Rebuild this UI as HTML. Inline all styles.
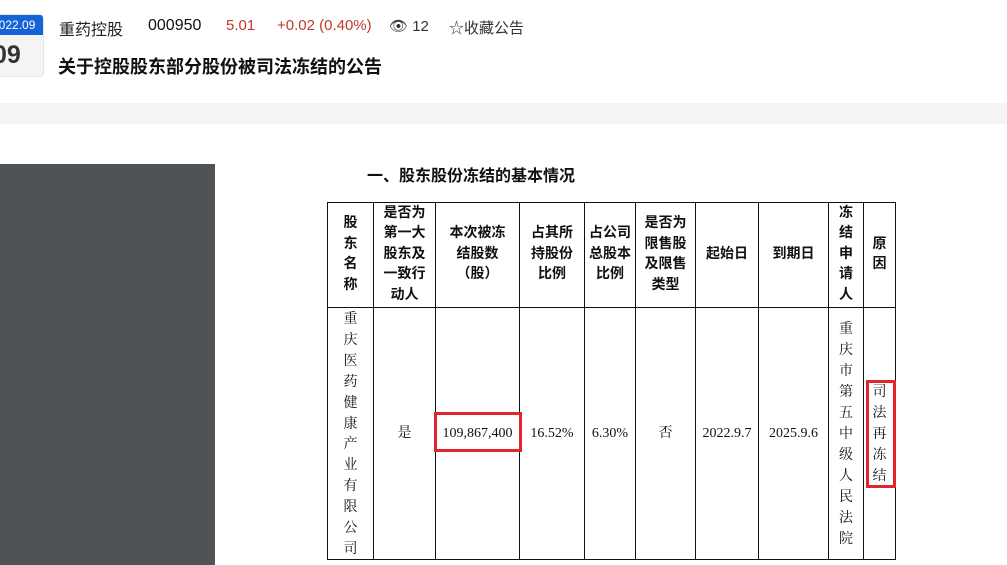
<!DOCTYPE html>
<html><head><meta charset="utf-8">
<style>
*{margin:0;padding:0;box-sizing:border-box}
body{width:1007px;height:565px;overflow:hidden;background:#fff;position:relative;font-family:"Liberation Sans","Noto Sans CJK SC",sans-serif;color:#222}
.a{position:absolute;white-space:nowrap}
.badge{position:absolute;left:-14px;top:14px;width:58px;height:63px;border-radius:4px;background:#f4f4f4;border:1px solid #e6e6e6;overflow:hidden}
.badge .t{height:20px;background:#1463d8;color:#fff;font-size:12px;line-height:20px;padding-left:5px}
.badge .d{font-size:25px;font-weight:bold;color:#333;line-height:40px;padding-left:6px}
table{position:absolute;left:327px;top:202px;border-collapse:collapse;font-family:"Liberation Serif","Noto Serif CJK SC",serif;font-size:14px;color:#111}
td{border:1.5px solid #111;text-align:center;vertical-align:middle;padding:0}
.h td{font-weight:bold;line-height:20.5px;height:105px;font-family:"Liberation Serif","Noto Sans CJK SC",sans-serif}
.b td{height:251px;line-height:23px}
.red{position:absolute;border:3px solid #e0262b}
</style></head><body>
<div class="badge"><div class="t">2022.09</div><div class="d">09</div></div>
<div class="a" style="left:59px;top:16px;font-size:16px;color:#222">重药控股</div>
<div class="a" style="left:148px;top:17px;font-size:16px;color:#111">000950</div>
<div class="a" style="left:226px;top:17px;font-size:15px;color:#c0392b">5.01</div>
<div class="a" style="left:277px;top:17px;font-size:15px;color:#c0392b">+0.02 (0.40%)</div>
<div class="a" style="left:389px;top:17px;font-size:15px;color:#333">👁︎ 12</div>
<div class="a" style="left:449px;top:17px;font-size:15px;color:#333">☆收藏公告</div>
<div class="a" style="left:58px;top:53px;font-size:18px;font-weight:bold;color:#111">关于控股股东部分股份被司法冻结的公告</div>
<div class="a" style="left:0;top:103px;width:1007px;height:21px;background:#f4f5f6"></div>
<div class="a" style="left:0;top:164px;width:215px;height:401px;background:#505355"></div>
<div class="a" style="left:367px;top:162px;font-size:16px;font-weight:bold;font-family:'Liberation Serif','Noto Sans CJK SC',sans-serif;color:#111">一、股东股份冻结的基本情况</div>
<table>
<colgroup><col style="width:46px"><col style="width:62px"><col style="width:84px"><col style="width:65px"><col style="width:51px"><col style="width:60px"><col style="width:63px"><col style="width:70px"><col style="width:35px"><col style="width:32px"></colgroup>
<tr class="h"><td>股<br>东<br>名<br>称</td><td>是否为<br>第一大<br>股东及<br>一致行<br>动人</td><td>本次被冻<br>结股数<br>（股）</td><td>占其所<br>持股份<br>比例</td><td>占公司<br>总股本<br>比例</td><td>是否为<br>限售股<br>及限售<br>类型</td><td>起始日</td><td>到期日</td><td>冻<br>结<br>申<br>请<br>人</td><td>原<br>因</td></tr>
<tr class="b"><td style="font-family:'Noto Serif CJK SC',serif;line-height:20.9px">重<br>庆<br>医<br>药<br>健<br>康<br>产<br>业<br>有<br>限<br>公<br>司</td><td>是</td><td>109,867,400</td><td>16.52%</td><td>6.30%</td><td>否</td><td>2022.9.7</td><td>2025.9.6</td><td style="font-family:'Noto Serif CJK SC',serif;line-height:21px">重<br>庆<br>市<br>第<br>五<br>中<br>级<br>人<br>民<br>法<br>院</td><td style="font-family:'Noto Serif CJK SC',serif;line-height:21px">司<br>法<br>再<br>冻<br>结</td></tr>
</table>
<div class="red" style="left:434px;top:412px;width:88px;height:40px"></div>
<div class="red" style="left:866px;top:380px;width:30px;height:108px"></div>
</body></html>
